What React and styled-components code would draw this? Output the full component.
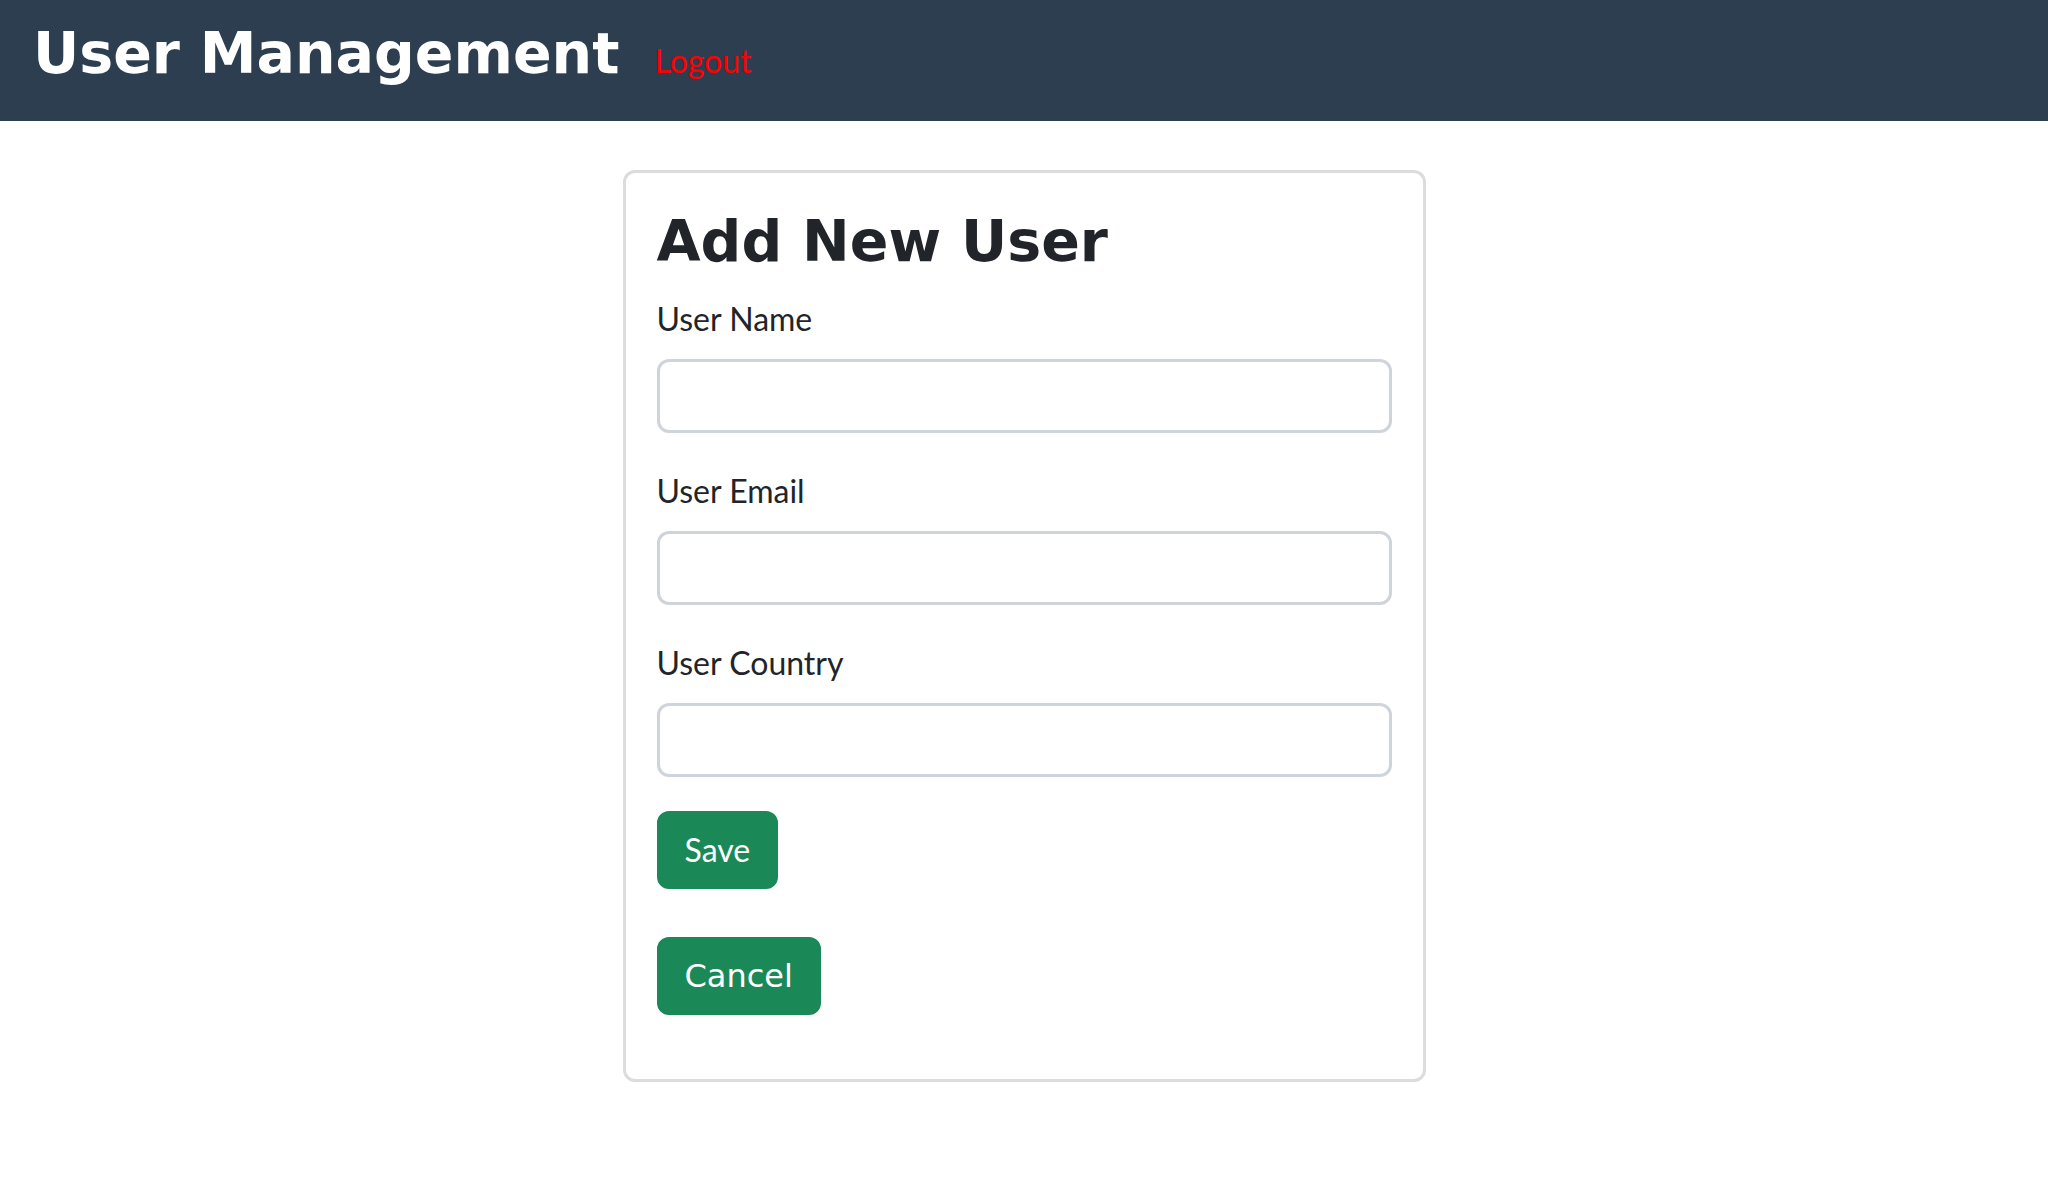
import React from 'react';
import styled, { createGlobalStyle } from 'styled-components';

const GlobalStyle = createGlobalStyle`
  html, body {
    margin: 0;
    padding: 0;
    background: #ffffff;
    font-family: Lato, "Open Sans", sans-serif;
    font-size: 32px;
    line-height: 1.5;
    color: #212529;
  }
  * { box-sizing: border-box; }
`;

const Header = styled.header`
  display: flex;
  align-items: baseline;
  gap: 35px;
  height: 121px;
  padding: 19px 33px 0;
  background: #2c3e50;
`;

const Brand = styled.h1`
  margin: 0;
  font-family: "DejaVu Sans", Inter, sans-serif;
  font-weight: 700;
  font-size: 57px;
  line-height: 1.2;
  color: #ffffff;
`;

const LogoutLink = styled.a`
  font-family: Lato, sans-serif;
  font-size: 32px;
  color: #ff0000;
  text-decoration: none;
  cursor: pointer;
`;

const Card = styled.div`
  width: 803px;
  margin: 49px auto 0;
  padding: 31px;
  border: 3px solid #dcdcdc;
  border-radius: 12px;
`;

const Title = styled.h2`
  margin: 3px 0 20px;
  font-family: "DejaVu Sans", Inter, sans-serif;
  font-weight: 700;
  font-size: 57px;
  line-height: 1.2;
  color: #212529;
`;

const Field = styled.div`
  display: flex;
  flex-direction: column;
  margin-bottom: 34px;
`;

const Label = styled.label`
  margin-bottom: 16px;
  font-size: 32px;
  line-height: 48px;
`;

const Input = styled.input`
  height: 74px;
  width: 100%;
  padding: 0 22px;
  font-family: Lato, sans-serif;
  font-size: 32px;
  border: 3px solid #ced4da;
  border-radius: 12px;
  outline: none;
`;

const Button = styled.button`
  display: block;
  margin-bottom: ${(props) => props.mb}px;
  padding: 13px 26px;
  font-family: ${(props) => (props.wide ? '"DejaVu Sans", sans-serif' : 'Lato, sans-serif')};
  font-size: 32px;
  line-height: 48px;
  color: #ffffff;
  background: #1b8857;
  border: 2px solid #1b8857;
  border-radius: 12px;
  cursor: pointer;
`;

const fields = ['User Name', 'User Email', 'User Country'];

export default function App() {
  return (
    <>
      <GlobalStyle />
      <Header>
        <Brand>User Management</Brand>
        <LogoutLink>Logout</LogoutLink>
      </Header>
      <Card>
        <Title>Add New User</Title>
        {fields.map((f) => (
          <Field key={f}>
            <Label>{f}</Label>
            <Input type="text" />
          </Field>
        ))}
        <Button mb={48}>Save</Button>
        <Button wide mb={33}>Cancel</Button>
      </Card>
    </>
  );
}
